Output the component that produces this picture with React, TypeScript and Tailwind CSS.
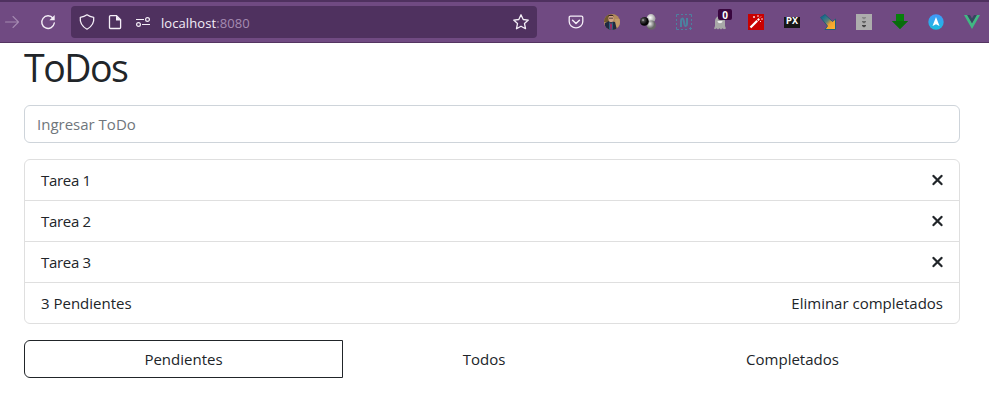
import type { ReactNode } from "react";

function Glyph({ children }: { children: ReactNode }) {
  return (
    <svg viewBox="0 0 16 16" className="size-4 shrink-0 overflow-visible" fill="none">
      {children}
    </svg>
  );
}

function AddressBar() {
  return (
    <div className="flex h-8 w-[466px] items-center rounded bg-[#4f315f] pr-2 pl-2 text-[#f4eef7]">
      <Glyph>
        <path d="M8 .8c2 1.500 4 2.200 6.700 2.500.6 5-1.600 9-6.700 11.900C2.900 12.300.7 8.300 1.300 3.300 4 3 6 2.300 8 .8Z" stroke="currentColor" strokeWidth="1.300" strokeLinejoin="round" />
      </Glyph>
      <div className="ml-3 flex">
        <Glyph>
          <path d="M3.500 1.600h6l4.100 4.100v7.800a1 1 0 0 1-1 1H3.500a1 1 0 0 1-1-1V2.600a1 1 0 0 1 1-1Z" stroke="currentColor" strokeWidth="1.300" />
          <path d="M9 1.500v5h5Z" fill="currentColor" />
        </Glyph>
      </div>
      <div className="ml-3 flex">
        <Glyph>
          <path d="M1 5.500h8M7 10.500h8" stroke="currentColor" strokeWidth="1.200" />
          <circle cx="12.500" cy="5.500" r="1.900" stroke="currentColor" strokeWidth="1.200" />
          <circle cx="3.500" cy="10.500" r="1.900" stroke="currentColor" strokeWidth="1.200" />
        </Glyph>
      </div>
      <span className="ml-[10px] flex-1 pt-px text-[13px] tracking-[0.080px]">
        localhost<span className="text-[#a58bb1]">:8080</span>
      </span>
      <Glyph>
        <path d="m8 .8 2.200 4.700 5.100.6-3.800 3.500 1 5.100L8 12.200l-4.500 2.500 1-5.100L.7 6.100l5.100-.6Z" stroke="currentColor" strokeWidth="1.300" strokeLinejoin="round" />
      </Glyph>
    </div>
  );
}

function Extensions() {
  return (
    <div className="ml-[31px] flex gap-5">
      <Glyph>
        <path d="M2.500 2.200h11c.8 0 1.300.5 1.300 1.200v4c0 3.700-3 6.500-6.800 6.500s-6.800-2.800-6.800-6.500v-4c0-.7.500-1.200 1.300-1.200Z" stroke="#f4eef7" strokeWidth="1.300" />
        <path d="m4.600 6.200 3.400 3.300 3.400-3.300" stroke="#f4eef7" strokeWidth="1.500" strokeLinecap="round" strokeLinejoin="round" />
      </Glyph>
      <Glyph>
        <defs>
          <clipPath id="avatar"><circle cx="8" cy="8" r="8" /></clipPath>
        </defs>
        <g clipPath="url(#avatar)">
          <path d="M0 0h16v16H0Z" fill="#b38b5b" />
          <path d="M0 0h5v8H0Z" fill="#70582d" />
          <path d="M11 5h5v8h-4Z" fill="#c29b69" />
          <path d="M1 16V9l4-2 6 1 2 8Z" fill="#202a40" />
          <ellipse cx="7" cy="4.500" rx="2.600" ry="3.800" fill="#d0a084" />
          <path d="M4.300 3c-.4-3.500 5.600-3.500 5.400 0L9 2H5Z" fill="#38271f" />
          <path d="M5 4.200h4" stroke="#3b302d" strokeWidth=".8" />
          <path d="m5 8 2 1.500L9 8v8H5Z" fill="#315c7d" />
          <path d="m7 9 1 2-.5 5H6.600L6 11Z" fill="#b0235e" />
        </g>
      </Glyph>
      <Glyph>
        <defs>
          <radialGradient id="darkBall" cx=".35" cy=".35"><stop stopColor="#bbb" /><stop offset=".35" stopColor="#444" /><stop offset="1" stopColor="#050505" /></radialGradient>
          <radialGradient id="lightBall" cx=".4" cy=".4"><stop stopColor="#fff" /><stop offset="1" stopColor="#a8a8a8" /></radialGradient>
          <radialGradient id="grayBall" cx=".35" cy=".35"><stop stopColor="#eee" /><stop offset="1" stopColor="#666" /></radialGradient>
        </defs>
        <circle cx="11" cy="4.500" r="4.400" fill="url(#lightBall)" />
        <circle cx="11.300" cy="11.200" r="4.600" fill="url(#grayBall)" />
        <circle cx="4.400" cy="7.400" r="4.400" fill="url(#darkBall)" />
      </Glyph>
      <Glyph>
        <path d="M.5 3V.5H3M5 .5h2M9 .5h2M13 .5h2.500V3M15.500 5v2M15.500 9v2M13 14.500h3M14.500 13v3M11 15.500H9M7 15.500H5M3 15.500H.5V13M.5 11V9M.5 7V5" stroke="#4c819f" />
        <path d="M5 13V7c0-3 2-3 2.500-1l1.200 5c.5 1.600 2.300 1.200 2.300-1V4" stroke="#4c819f" strokeWidth="2" />
      </Glyph>
      <div className="relative flex">
        <Glyph>
          <path d="M2 14.500 3 12V7a5 5 0 0 1 10 0v5l1 2.500-2 .7-1.500-1-1.500 1.300-1.500-1.300L6 15.500l-1.500-1.300-1.500 1Z" fill="#a8a8a8" />
          <path d="M5.500 7c.2 3 4.800 3 5 0Z" fill="#eee" />
        </Glyph>
        <span className="absolute -top-[5px] left-[6px] flex h-[11px] w-[14px] items-center justify-center rounded-[2px] bg-[#39063e] font-['Open_Sans',sans-serif] text-[10px] leading-none font-bold text-white">0</span>
      </div>
      <Glyph>
        <path d="M0 0h16v16H0Z" fill="#c90000" />
        <path d="m2.500 13.500 6.700-6.700" stroke="white" strokeWidth="2.200" />
        <path d="m9.700 6.300 1.500-1.500" stroke="white" strokeWidth="2" />
        <path d="M6 2v2M5 3h2M10 1v2M12 3.500l1-1M13 5h2M12 7l1 1" stroke="#ffd9d9" />
      </Glyph>
      <div className="flex h-4 w-4 items-center">
        <span className="flex h-[11px] w-4 items-center justify-center bg-[#171717] font-['Liberation_Mono',monospace] text-[10px] leading-none font-bold text-white">PX</span>
      </div>
      <Glyph>
        <defs>
          <linearGradient id="diagonalArrow" x1="3" y1="3" x2="14" y2="14" gradientUnits="userSpaceOnUse"><stop stopColor="#176c8d" /><stop offset=".38" stopColor="#577e79" /><stop offset=".62" stopColor="#f0a12e" /><stop offset="1" stopColor="#ffb22e" /></linearGradient>
        </defs>
        <path d="M.5 3.500 5 .5l7.500 7L15.500 5v10.500H5L7.500 12Z" fill="url(#diagonalArrow)" stroke="#235d78" />
      </Glyph>
      <Glyph>
        <path d="M0 0h16v16H0Z" fill="#adadad" />
        <path d="M6 3h4v1L8 5.500 6 4Z" fill="#888" />
        <path d="M6 7h4v1L8 9.500 6 8Z" fill="#686868" />
        <path d="M6 11h4v1l-2 1.500L6 12Z" fill="#454545" />
      </Glyph>
      <Glyph>
        <path d="M4 0h8v7h4l-8 8-8-8h4Z" fill="#07800b" />
        <path d="M0 7h16l-8 8Z" fill="#096c0b" />
      </Glyph>
      <Glyph>
        <defs><linearGradient id="compass" x2="0" y2="1"><stop stopColor="#4297fa" /><stop offset="1" stopColor="#19bddd" /></linearGradient></defs>
        <circle cx="8" cy="8" r="7.700" fill="url(#compass)" />
        <path d="m8 3 3.500 9L8 10.300 4.500 12Z" fill="white" />
      </Glyph>
      <Glyph>
        <path d="M0 1h3.200L8 9.300 12.800 1H16L8 15Z" fill="#41b883" />
        <path d="M3.200 1H6l2 3.500L10 1h2.800L8 9.300Z" fill="#34495e" />
      </Glyph>
    </div>
  );
}

function BrowserToolbar() {
  return (
    <div className="flex h-[43px] items-center border-t-2 border-b border-t-[#4f315f] border-b-[#543461] bg-[#704a82] pl-1">
      <Glyph>
        <path d="M1.500 8h13M9 2.500 14.500 8 9 13.500" stroke="#a489b0" strokeWidth="1.100" strokeLinecap="round" strokeLinejoin="round" />
      </Glyph>
      <div className="mr-[15px] ml-5 flex">
        <Glyph>
          <path d="M13 4.200A6.300 6.300 0 1 0 14.300 9" stroke="#f4eef7" strokeWidth="1.400" strokeLinecap="round" />
          <path d="M14.700 1v5.300H9.400Z" fill="#f4eef7" />
        </Glyph>
      </div>
      <AddressBar />
      <Extensions />
    </div>
  );
}

const tasks = ["Tarea 1", "Tarea 2", "Tarea 3"];

export default function App() {
  return (
    <div className="h-[404px] overflow-hidden bg-white font-['Open_Sans','Noto_Sans',sans-serif] text-[15px] leading-6 text-[#212529]">
      <BrowserToolbar />
      <main className="mr-[29px] ml-6">
        <h1 className="h-[62px] text-[37.500px] leading-[50px] tracking-[-1.500px]">ToDos</h1>
        <input
          className="block h-[38px] w-full rounded-md border border-[#ced4da] px-3 outline-none placeholder:text-[#6f767c] placeholder:opacity-100"
          placeholder="Ingresar ToDo"
        />
        <ul className="mt-4 rounded-md border border-[#dfdfdf]">
          {tasks.map((task) => (
            <li key={task} className="flex h-[41px] items-center justify-between border-b border-[#dfdfdf] px-4">
              <span className="tracking-[-0.300px]">{task}</span>
              <button aria-label={`Eliminar ${task}`}>
                <svg viewBox="0 0 11 12" className="h-3 w-[11px]">
                  <path d="m1.500 1.900 8 8.200m0-8.200-8 8.200" stroke="currentColor" strokeWidth="2.200" strokeLinecap="round" />
                </svg>
              </button>
            </li>
          ))}
          <li className="flex h-10 items-center justify-between px-4">
            <span>3 Pendientes</span>
            <button>Eliminar completados</button>
          </li>
        </ul>
        <div className="mt-4 flex h-[38px]">
          <button className="w-[319px] rounded-l-md border border-[#212529]">Pendientes</button>
          <button className="w-[282px]">Todos</button>
          <button className="flex-1">Completados</button>
        </div>
      </main>
    </div>
  );
}
